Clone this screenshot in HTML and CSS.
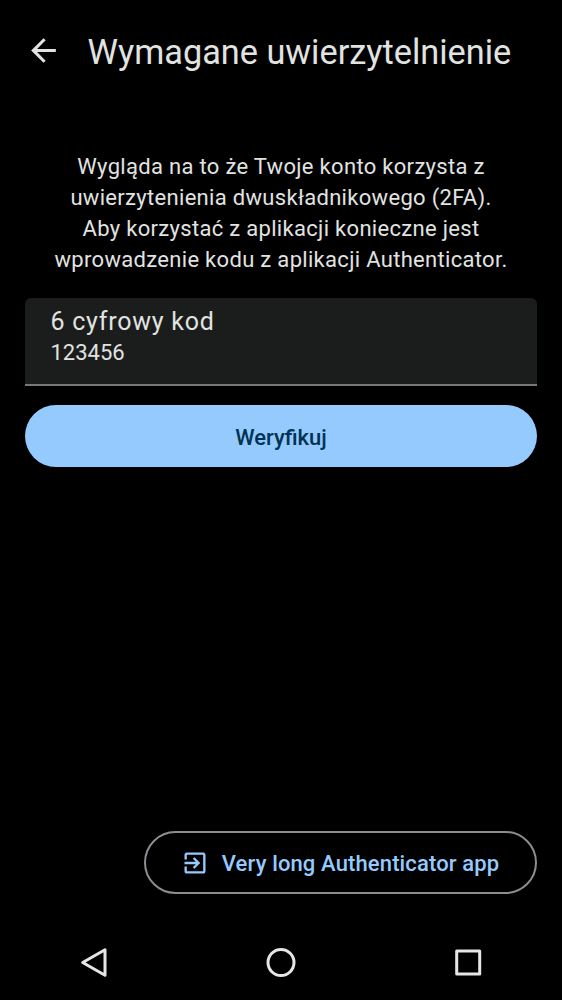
FILE: index.html
```html
<!DOCTYPE html>
<html lang="pl">
<head>
<meta charset="utf-8">
<title>Wymagane uwierzytelnienie</title>
<link rel="stylesheet" href="styles.css">
</head>
<body>
<div class="screen">
  <header class="top-bar">
    <svg class="back" viewBox="0 0 24 24"><path d="M20 11H7.83l5.59-5.59L12 4l-8 8 8 8 1.41-1.41L7.83 13H20v-2z"/></svg>
    <h1 class="title">Wymagane uwierzytelnienie</h1>
  </header>
  <main class="content">
    <p class="message">
      <span class="line">Wygląda na to że Twoje konto korzysta z</span>
      <span class="line">uwierzytenienia dwuskładnikowego (2FA).</span>
      <span class="line">Aby korzystać z aplikacji konieczne jest</span>
      <span class="line">wprowadzenie kodu z aplikacji Authenticator.</span>
    </p>
    <div class="field">
      <span class="label">6 cyfrowy kod</span>
      <span class="value">123456</span>
    </div>
    <button class="verify">Weryfikuj</button>
    <button class="open-app">
      <svg class="exit" viewBox="0 0 24 24"><path d="M10.09 15.59L11.5 17l5-5-5-5-1.41 1.41L12.67 11H3v2h9.67l-2.58 2.59zM19 3H5c-1.11 0-2 .9-2 2v4h2V5h14v14H5v-4H3v4c0 1.1.89 2 2 2h14c1.1 0 2-.9 2-2V5c0-1.1-.9-2-2-2z"/></svg>
      <span class="app-name">Very long Authenticator app</span>
    </button>
  </main>
  <nav class="nav-bar">
    <svg class="nav-icon" viewBox="0 0 36 36"><path d="M29 4.8v25.4L6.7 17.5z"/></svg>
    <svg class="nav-icon" viewBox="0 0 36 36"><circle cx="18" cy="17.5" r="13"/></svg>
    <svg class="nav-icon" viewBox="0 0 36 36"><rect x="6.7" y="6" width="23" height="23"/></svg>
  </nav>
</div>
</body>
</html>
```
FILE: styles.css
```css
* { box-sizing: border-box; }
body { margin: 0; background: #000; color: #e1e3e1; font-family: Roboto, sans-serif; }
.screen { width: 562px; height: 1000px; display: flex; flex-direction: column; background: #000; }
.top-bar { height: 100px; display: flex; align-items: center; padding-left: 25px; gap: 25.5px; }
.back { width: 37px; height: 37px; fill: #e1e3e1; }
.title { margin: 3px 0 0; font-size: 34.3px; font-weight: 400; line-height: 44px; white-space: nowrap; }
.content { flex: 1; display: flex; flex-direction: column; padding: 51px 25px 31px; }
.message { margin: 0 0 23px; text-align: center; font-size: 22px; line-height: 31px; letter-spacing: .31px; }
.line { display: block; white-space: nowrap; }
.field { height: 88px; display: flex; flex-direction: column; padding: 8px 25.5px; background: #1b1d1c; border-bottom: 2px solid #777877; border-radius: 6px 6px 0 0; }
.label { font-size: 25px; line-height: 31px; letter-spacing: .75px; }
.value { font-size: 22px; line-height: 31px; }
.verify { height: 62px; margin-top: 19px; padding: 2px 0 0; border: 0; border-radius: 31px; background: #95caff; color: #003353; font: 500 22px Roboto, sans-serif; }
.open-app { display: flex; align-items: center; justify-content: center; align-self: flex-end; width: 393.5px; height: 63px; margin-top: auto; gap: 12.5px; padding: 0; border: 2px solid #8e8c92; border-radius: 32px; background: transparent; color: #95caff; font: 500 22px Roboto, sans-serif; letter-spacing: .13px; white-space: nowrap; }
.app-name { padding-top: 2px; }
.exit { width: 28px; height: 28px; fill: #95caff; }
.nav-bar { height: 75px; display: flex; justify-content: space-around; align-items: center; }
.nav-icon { width: 36px; height: 36px; fill: none; stroke: #e6e6e6; stroke-width: 3; stroke-linejoin: round; }
```
